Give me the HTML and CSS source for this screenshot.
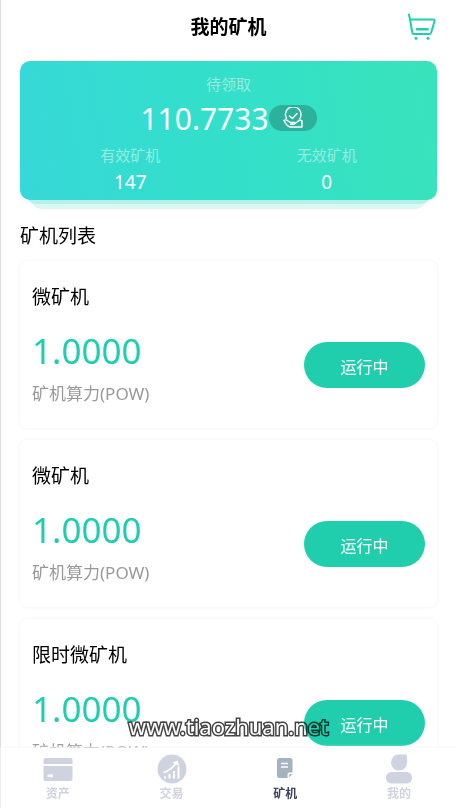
FILE: index.html
```html
<!DOCTYPE html>
<html lang="zh-CN">
<head>
<meta charset="utf-8">
<meta name="viewport" content="width=device-width, initial-scale=1">
<title>我的矿机</title>
<link rel="stylesheet" href="styles.css">
</head>
<body>
<div class="app">
  <header class="header">
    <h1 class="header-title">我的矿机</h1>
    <button class="cart" type="button" aria-label="购物车">
      <svg width="28" height="28" viewBox="0 0 28 28" fill="none" stroke="#20ceae" stroke-width="2" stroke-linecap="round" stroke-linejoin="round">
        <path d="M1 1.500 2 6.500 4.300 19.500Q4.600 21 6 21H21.500Q22.800 21 23.200 19.600L26.500 8.200Q27 6.500 25.500 6.500H2"/>
        <path d="M9 16.300H19.500" stroke-width="2.500"/>
        <circle cx="8" cy="25.300" r="1.500" fill="#20ceae" stroke="none"/>
        <circle cx="20" cy="25.300" r="1.500" fill="#20ceae" stroke="none"/>
      </svg>
    </button>
  </header>

  <main class="content">
    <section class="summary">
      <div class="summary-card">
        <p class="label">待领取</p>
        <div class="pending">
          <span class="pending-value">110.7733</span>
          <button class="claim" type="button" aria-label="领取">
            <svg width="22" height="22" viewBox="0 0 22 22" fill="none" stroke="#fff" stroke-width="1.400" stroke-linecap="round" stroke-linejoin="round">
              <path d="M4.500 11.500A7.800 7.800 0 1 1 17.500 12.200"/>
              <path d="M7.500 9 10.500 11.500 15 6.500"/>
              <path d="M2 13.500Q4 12 6 14L8.500 15.500H12.500Q13.500 17.300 11 17.300H8.500M13 16.500 17 13.500Q19 12.800 20 14V20H8Q5 19.500 2 13.500"/>
            </svg>
          </button>
        </div>
        <dl class="stats">
          <div><dt class="label">有效矿机</dt><dd>147</dd></div>
          <div><dt class="label">无效矿机</dt><dd>0</dd></div>
        </dl>
      </div>
    </section>

    <h2 class="list-title">矿机列表</h2>
    <ul class="miners">
      <li class="miner">
        <div class="miner-info">
          <h3>微矿机</h3>
          <p class="power">1.0000</p>
          <p class="unit">矿机算力(POW)</p>
        </div>
        <button class="status" type="button">运行中</button>
      </li>
      <li class="miner">
        <div class="miner-info">
          <h3>微矿机</h3>
          <p class="power">1.0000</p>
          <p class="unit">矿机算力(POW)</p>
        </div>
        <button class="status" type="button">运行中</button>
      </li>
      <li class="miner">
        <div class="miner-info">
          <h3>限时微矿机</h3>
          <p class="power">1.0000</p>
          <p class="unit">矿机算力(POW)</p>
        </div>
        <button class="status" type="button">运行中</button>
      </li>
    </ul>
  </main>

  <p class="watermark">www.tiaozhuan.net</p>

  <nav class="tabs">
    <a class="tab" href="#assets">
      <svg width="30" height="30" viewBox="0 0 30 30" fill="#ced3df">
        <path d="M2.500 4H27.500Q29.500 4 29.500 6V10H.5V6Q.5 4 2.500 4Z"/>
        <path fill-rule="evenodd" d="M.5 12H29.500V25Q29.500 27 27.500 27H2.500Q.5 27 .5 25ZM4.500 20.500V23H10V20.500Z"/>
      </svg>
      <span>资产</span>
    </a>
    <a class="tab" href="#trade">
      <svg width="30" height="30" viewBox="0 0 30 30">
        <circle cx="15" cy="15" r="14.500" fill="#ced3df"/>
        <g fill="none" stroke="#fff" stroke-width="2">
          <path d="M8 24.500V22.500M12.500 24.500V20M17 24.500V17M21.500 24.500V12.500"/>
          <path d="M6.500 18.500Q14.500 16 19.500 8.500" stroke-width="1.700"/>
          <path d="M15.500 8.500 21 6.500 22 12Z" fill="#fff" stroke="none"/>
        </g>
      </svg>
      <span>交易</span>
    </a>
    <a class="tab tab-active" href="#miners" aria-current="page">
      <svg width="30" height="30" viewBox="0 0 30 30">
        <path d="M9.500 4H20Q22.500 4 22.500 6.500V18.500H19.500Q17.500 18.500 17.500 20.500V24H9.500Q7 24 7 21.500V6.500Q7 4 9.500 4Z" fill="#a3b3c0"/>
        <path d="M19 23.500V21.500Q19 20 20.500 20H22.500Z" fill="#a3b3c0"/>
        <path d="M11 9.500H18M11 13H18" stroke="#fff" stroke-width="1.300"/>
      </svg>
      <span>矿机</span>
    </a>
    <a class="tab" href="#me">
      <svg width="30" height="30" viewBox="0 0 30 30" fill="#ced3df">
        <path d="M15 .5H21.500Q23 .5 23 2V8.500A8 8 0 1 1 15 .5Z"/>
        <rect x="2" y="18" width="26" height="11.500" rx="5.500"/>
      </svg>
      <span>我的</span>
    </a>
  </nav>
</div>
</body>
</html>
```
FILE: styles.css
```css
* {
  box-sizing: border-box;
  margin: 0;
  padding: 0;
}

body {
  height: 100vh;
  overflow: hidden;
  background: #fff;
  color: #000;
  font-family: "Noto Sans", "Noto Sans CJK SC", sans-serif;
}

button {
  border: 0;
  background: none;
  font: inherit;
}

.app {
  position: relative;
  display: flex;
  flex-direction: column;
  height: 100vh;
  border-left: 1px solid #dcdce4;
}

.header {
  display: grid;
  grid-template-columns: 1fr auto 1fr;
  align-items: center;
  flex: none;
  height: 54px;
  padding: 0 20px;
}

.header-title {
  grid-column: 2;
  font-size: 19px;
  line-height: 28px;
}

.cart {
  justify-self: end;
  height: 28px;
}

.cart svg,
.claim svg,
.tab svg {
  display: block;
}

.content {
  flex: 1;
  min-height: 0;
  overflow: hidden;
  padding: 7px 19px 0;
}

.summary {
  position: relative;
  padding-bottom: 9px;
}

.summary::before,
.summary::after {
  content: "";
  position: absolute;
  bottom: 0;
  left: 10px;
  right: 10px;
  height: 30px;
  border-radius: 12px;
  background: #dcf8f3;
}

.summary::after {
  bottom: 5px;
  left: 5px;
  right: 5px;
  background: #b5f1e7;
}

.summary-card {
  position: relative;
  z-index: 1;
  height: 139px;
  padding-top: 11px;
  border-radius: 10px;
  background: linear-gradient(80deg, #37d8d8, #33dfcb 45%, #38e3bb);
  color: #fff;
  text-align: center;
}

.label {
  color: #95ede2;
  font-size: 15px;
  line-height: 24px;
}

.pending {
  display: flex;
  align-items: center;
  justify-content: center;
  height: 46px;
}

.pending-value {
  font-size: 30px;
  line-height: 44px;
}

.claim {
  display: flex;
  align-items: center;
  justify-content: center;
  width: 48px;
  height: 26px;
  margin-bottom: 2px;
  border-radius: 13px;
  background: #2bb19c;
}

.stats {
  display: grid;
  grid-template-columns: 1fr 1fr;
  padding: 0 12px;
}

.stats dt {
  line-height: 26px;
}

.stats dd {
  font-size: 19px;
  line-height: 28px;
}

.list-title {
  margin: 12px 0 10px;
  font-size: 19px;
  font-weight: 400;
  line-height: 30px;
}

.miners {
  display: grid;
  gap: 12px;
  list-style: none;
}

.miner {
  display: flex;
  align-items: center;
  justify-content: space-between;
  height: 167px;
  padding: 0 12px;
  border-radius: 8px;
  box-shadow: 0 0 3px 1px #f7f7f7;
}

.miner h3 {
  font-size: 19px;
  font-weight: 400;
  line-height: 28px;
}

.power {
  margin-top: 14px;
  color: #20ceae;
  font-size: 35px;
  line-height: 52px;
}

.unit {
  margin-top: 4px;
  color: #999;
  font-size: 17px;
  line-height: 26px;
}

.status {
  width: 121px;
  height: 46px;
  margin-top: 40px;
  padding-top: 3px;
  border-radius: 23px;
  background: #20ceae;
  color: #fff;
  font-size: 16px;
}

/* Multiply keeps the outline and lets the page show through the white fill. */
.watermark {
  position: absolute;
  right: 0;
  bottom: 66px;
  left: 0;
  color: #fff;
  font-size: 22px;
  line-height: 32px;
  text-align: center;
  -webkit-text-stroke: 3px #444;
  paint-order: stroke fill;
  mix-blend-mode: multiply;
}

.tabs {
  position: relative;
  display: grid;
  grid-template-columns: repeat(4, 1fr);
  flex: none;
  height: 60px;
  background: #fff;
  box-shadow: 0 0 3px 1px #f7f7f7;
}

.tab {
  display: flex;
  flex-direction: column;
  align-items: center;
  padding-top: 6px;
  color: #ced3df;
  font-size: 12px;
  font-weight: 700;
  line-height: 20px;
  text-decoration: none;
}

.tab-active {
  color: #3d4359;
}
```
